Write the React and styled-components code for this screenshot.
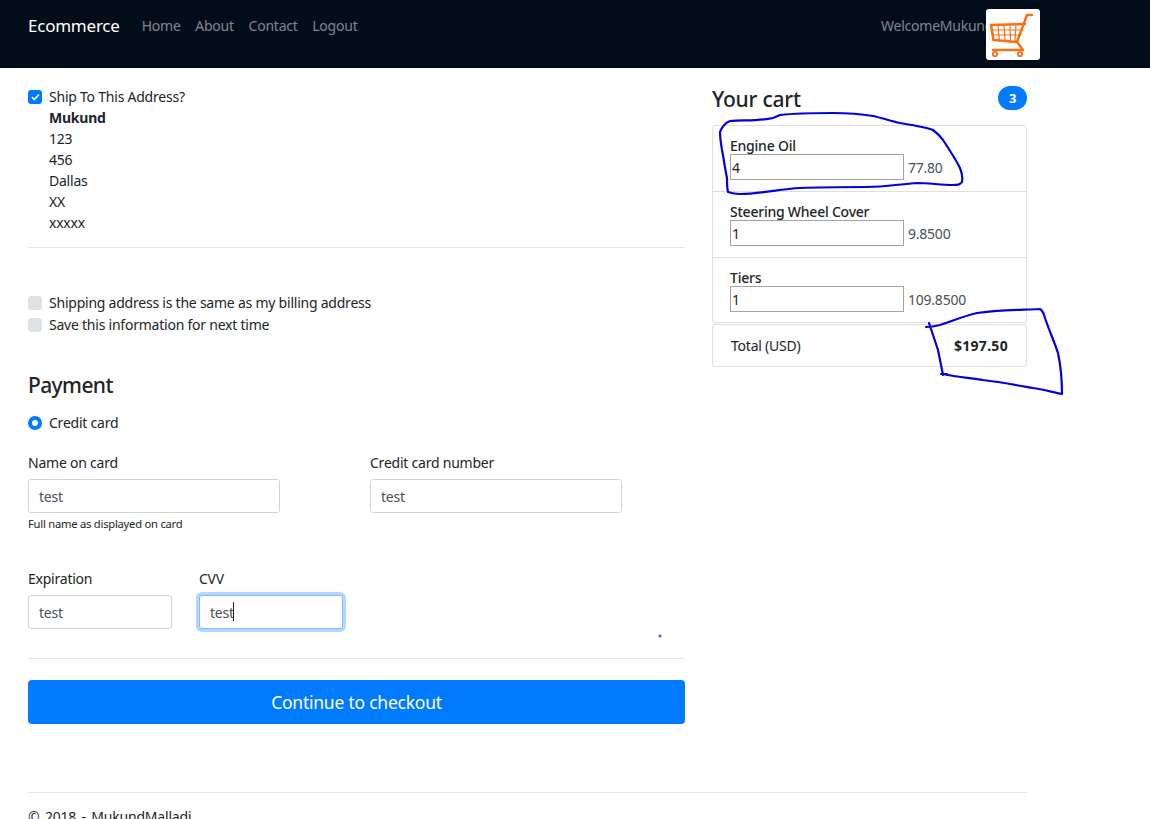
import React from 'react'
import styled, { createGlobalStyle } from 'styled-components'

const GlobalStyle = createGlobalStyle`
  html, body {
    margin: 0;
    padding: 0;
    height: 819px;
    overflow: hidden;
    background: #fff;
  }
  body {
    font-family: "Noto Sans", "Open Sans", sans-serif;
    font-size: 14px;
    line-height: 21px;
    color: #212529;
    letter-spacing: -0.23px;
  }
  * { box-sizing: border-box; }
`

function CartLogo() {
  return (
    <svg width="54" height="51" viewBox="0 0 54 51">
      <g fill="none" stroke="#fb6f12" strokeLinecap="round" strokeLinejoin="round">
        <path d="M46 6h-5l-10 27 6 8H7" strokeWidth="2.4" />
        <path d="M5 16l34-1" strokeWidth="2.6" />
        <path d="M5 16l2.500 15L31 33" strokeWidth="2.6" />
        <path d="M6 21h31M7 26h28M12 16l1.500 16M18 16l1 16M24 15.500l.5 17M30 15.500l-1 17" strokeWidth="1.2" />
        <circle cx="9" cy="45" r="2.2" strokeWidth="1.8" />
        <circle cx="34" cy="45" r="2.2" strokeWidth="1.8" />
      </g>
    </svg>
  )
}

function App() {
  return (
    <Page>
      <GlobalStyle />
      <Navbar>
        <Brand>Ecommerce</Brand>
        <NavLink>Home</NavLink>
        <NavLink>About</NavLink>
        <NavLink>Contact</NavLink>
        <NavLink>Logout</NavLink>
        <Welcome>WelcomeMukund</Welcome>
        <LogoBox><CartLogo /></LogoBox>
      </Navbar>

      <Main>
        <Left>
          <CheckRow>
            <CheckBox $checked>
              <svg width="9" height="8" viewBox="0 0 9 8">
                <path d="M1 4.2l2.3 2.3L8 1.5" fill="none" stroke="#fff" strokeWidth="1.7" />
              </svg>
            </CheckBox>
            Ship To This Address?
          </CheckRow>
          <Address>
            <strong>Mukund</strong>
            <span>123</span>
            <span>456</span>
            <span>Dallas</span>
            <span>XX</span>
            <span>xxxxx</span>
          </Address>
          <Rule />
          <Options>
            <CheckRow><CheckBox />Shipping address is the same as my billing address</CheckRow>
            <CheckRow><CheckBox />Save this information for next time</CheckRow>
          </Options>
          <PaymentTitle>Payment</PaymentTitle>
          <CheckRow><Radio />Credit card</CheckRow>

          <CardFields>
            <Field $width={252}>
              <FieldLabel>Name on card</FieldLabel>
              <TextInput readOnly value="test" />
              <Hint>Full name as displayed on card</Hint>
            </Field>
            <Field $width={252}>
              <FieldLabel>Credit card number</FieldLabel>
              <TextInput readOnly value="test" />
            </Field>
          </CardFields>

          <ExpiryFields>
            <Field $width={144}>
              <FieldLabel>Expiration</FieldLabel>
              <TextInput readOnly value="test" />
            </Field>
            <Field $width={144}>
              <FieldLabel>CVV</FieldLabel>
              <InputWrap>
                <TextInput readOnly value="test" $focused />
                <Caret />
              </InputWrap>
            </Field>
          </ExpiryFields>

          <CheckoutRule />
          <CheckoutButton>Continue to checkout</CheckoutButton>
        </Left>

        <Right>
          <CartHeader>
            <CartTitle>Your cart</CartTitle>
            <Badge>3</Badge>
          </CartHeader>
          <CartList>
            <CartItem name="Engine Oil" qty="4" price="77.80" />
            <CartItem name="Steering Wheel Cover" qty="1" price="9.8500" />
            <CartItem name="Tiers" qty="1" price="109.8500" />
          </CartList>
          <TotalRow>
            <span>Total (USD)</span>
            <TotalAmount>$197.50</TotalAmount>
          </TotalRow>
        </Right>
      </Main>

      <Footer>© 2018 - MukundMalladi</Footer>

      <Scribble width="1150" height="819" viewBox="0 0 1150 819">
        <g fill="none" stroke="#0000e0" strokeWidth="2.2" strokeLinecap="round" strokeLinejoin="round">
          <path d="M720 132c2-5 5-9 10-11 14-1 30 0 43-3l7-3c18-2 36-2 53-2 14 0 28 1 40 3 9 2 18 5 27 7 12 2 25 4 33 7 4 3 7 6 10 10 6 9 12 18 17 28 2 5 3 9 2 14-2 3-5 3-9 3-12 0-24-2-36-2-16 1-33 4-50 4-22 0-45 0-67 1-20 1-40 6-60 6-5 0-9-1-12-2-1-4-1-9-1-14-2-9-3-18-5-28-1-6-2-12-2-18" />
          <path d="M926 327c5 0 10-1 14-2 12-4 24-9 37-12 20-3 42-3 63-4 3 2 4 5 5 9 4 12 9 23 13 35 3 14 4 27 4 41-10-2-20-5-29-6-17-3-33-6-50-8-13-2-27-3-40-6" />
          <path d="M929 323l4 12 5 15 5 25" />
          <path d="M941 374h6" />
          <circle cx="660" cy="636" r="0.4" />
        </g>
      </Scribble>
    </Page>
  )
}

function CartItem({ name, qty, price }) {
  return (
    <ItemRow>
      <ItemName>{name}</ItemName>
      <ItemLine>
        <QtyInput readOnly value={qty} />
        <ItemPrice>{price}</ItemPrice>
      </ItemLine>
    </ItemRow>
  )
}

export default App

const Page = styled.div`
  position: relative;
  width: 1150px;
  height: 819px;
  overflow: hidden;
`

const Navbar = styled.nav`
  height: 68px;
  background: #030c19;
  display: flex;
  align-items: flex-start;
  padding: 15px 0 0 28px;
  position: relative;
`

const Brand = styled.div`
  color: #fff;
  font-size: 17px;
  margin-right: 22px;
`

const NavLink = styled.a`
  color: rgba(255, 255, 255, 0.5);
  margin-right: 14.7px;
`

const Welcome = styled.div`
  color: rgba(255, 255, 255, 0.5);
  margin-left: auto;
  margin-right: 163px;
  white-space: nowrap;
  width: 106px;
`

const LogoBox = styled.div`
  position: absolute;
  left: 986px;
  top: 9px;
  width: 54px;
  height: 51px;
  background: #fff;
  border-radius: 3px;
`

const Main = styled.main`
  display: flex;
  gap: 27px;
  padding: 18px 0 0 28px;
`

const Left = styled.div`
  width: 657px;
`

const Right = styled.div`
  width: 315px;
`

const CheckRow = styled.div`
  display: flex;
  align-items: center;
  gap: 7px;
  height: 21px;
`

const CheckBox = styled.span`
  width: 14px;
  height: 14px;
  border-radius: 3px;
  background: ${p => (p.$checked ? '#007bff' : '#dee2e6')};
  display: flex;
  align-items: center;
  justify-content: center;
`

const Radio = styled.span`
  width: 14px;
  height: 14px;
  border-radius: 50%;
  background: #fff;
  border: 4px solid #007bff;
`

const Address = styled.div`
  display: flex;
  flex-direction: column;
  padding-left: 21px;
`

const Rule = styled.hr`
  border: 0;
  border-top: 1px solid #e5e5e5;
  margin: 14px 0 0;
`

const Options = styled.div`
  display: flex;
  flex-direction: column;
  gap: 1px;
  margin-top: 44px;
`

const PaymentTitle = styled.h4`
  font-size: 21px;
  line-height: 25px;
  font-weight: 500;
  letter-spacing: -0.6px;
  margin: 38px 0 14px;
`

const CardFields = styled.div`
  display: flex;
  gap: 90px;
  margin-top: 19px;
  height: 106px;
`

const ExpiryFields = styled.div`
  display: flex;
  gap: 27px;
  margin-top: 10px;
`

const Field = styled.div`
  width: ${p => p.$width}px;
`

const FieldLabel = styled.div`
  margin-bottom: 6px;
`

const Hint = styled.div`
  font-size: 11.2px;
  line-height: 16px;
  margin-top: 3px;
`

const InputWrap = styled.div`
  position: relative;
`

const TextInput = styled.input`
  display: block;
  width: 100%;
  height: 34px;
  padding: 0 10px;
  font: inherit;
  letter-spacing: inherit;
  color: #495057;
  background: #fff;
  border: 1px solid ${p => (p.$focused ? '#80bdff' : '#ced4da')};
  border-radius: 3px;
  outline: none;
  box-shadow: ${p => (p.$focused ? '0 0 0 3px rgba(0, 123, 255, 0.3)' : 'none')};
`

const Caret = styled.span`
  position: absolute;
  left: 34px;
  top: 7px;
  width: 1px;
  height: 19px;
  background: #212529;
`

const CheckoutRule = styled.hr`
  border: 0;
  border-top: 1px solid #e5e5e5;
  margin: 29px 0 21px;
`

const CheckoutButton = styled.button`
  display: block;
  width: 100%;
  height: 44px;
  border: 0;
  border-radius: 4px;
  background: #007bff;
  color: #fff;
  font: inherit;
  font-size: 17.5px;
  letter-spacing: inherit;
`

const CartHeader = styled.div`
  display: flex;
  justify-content: space-between;
  align-items: flex-start;
  height: 39px;
`

const CartTitle = styled.h4`
  font-size: 21px;
  line-height: 25px;
  font-weight: 500;
  margin: 0;
  padding-top: 1px;
`

const Badge = styled.span`
  width: 29px;
  height: 24px;
  border-radius: 12px;
  background: #007bff;
  color: #fff;
  font-size: 13px;
  font-weight: 700;
  display: flex;
  align-items: center;
  justify-content: center;
`

const CartList = styled.div`
  border: 1px solid #dfdfdf;
  border-radius: 3px;
`

const ItemRow = styled.div`
  height: 66px;
  padding: 11px 0 0 17px;
  border-bottom: 1px solid #dfdfdf;
  &:last-child {
    border-bottom: 0;
    height: 64px;
  }
`

const ItemName = styled.div`
  font-weight: 500;
  line-height: 17px;
`

const ItemLine = styled.div`
  display: flex;
  align-items: center;
  gap: 4px;
`

const QtyInput = styled.input`
  width: 174px;
  height: 26px;
  padding: 0 1px;
  border: 1px solid #a3a3a3;
  font: inherit;
  letter-spacing: inherit;
  color: #212529;
  outline: none;
`

const ItemPrice = styled.span`
  color: #495057;
`

const TotalRow = styled.div`
  margin-top: 1px;
  height: 43px;
  padding: 0 18px;
  display: flex;
  justify-content: space-between;
  align-items: center;
  border: 1px solid #dfdfdf;
  border-radius: 3px;
`

const TotalAmount = styled.strong`
  letter-spacing: 0.3px;
`

const Footer = styled.footer`
  margin: 68px 123px 0 28px;
  padding-top: 13px;
  border-top: 1px solid #e5e5e5;
  letter-spacing: -0.2px;
  word-spacing: 2px;
`

const Scribble = styled.svg`
  position: absolute;
  left: 0;
  top: 0;
  pointer-events: none;
`
